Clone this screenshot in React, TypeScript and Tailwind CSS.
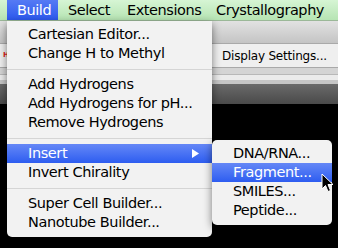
type Row =
  | { kind: 'item'; label: string; active?: boolean; sub?: boolean }
  | { kind: 'sep' }

const mainRows: Row[] = [
  { kind: 'item', label: 'Cartesian Editor...' },
  { kind: 'item', label: 'Change H to Methyl' },
  { kind: 'sep' },
  { kind: 'item', label: 'Add Hydrogens' },
  { kind: 'item', label: 'Add Hydrogens for pH...' },
  { kind: 'item', label: 'Remove Hydrogens' },
  { kind: 'sep' },
  { kind: 'item', label: 'Insert', active: true, sub: true },
  { kind: 'item', label: 'Invert Chirality' },
  { kind: 'sep' },
  { kind: 'item', label: 'Super Cell Builder...' },
  { kind: 'item', label: 'Nanotube Builder...' },
]

const subRows: Row[] = [
  { kind: 'item', label: 'DNA/RNA...' },
  { kind: 'item', label: 'Fragment...', active: true },
  { kind: 'item', label: 'SMILES...' },
  { kind: 'item', label: 'Peptide...' },
]

const menuBar = [
  { label: 'Build', width: 'w-[51px]', active: true },
  { label: 'Select', width: 'w-[59px]' },
  { label: 'Extensions', width: 'w-[89px]' },
  { label: 'Crystallography', width: 'w-[126px]' },
]

function MenuRows({ rows }: { rows: Row[] }) {
  return (
    <>
      {rows.map((row, i) =>
        row.kind === 'sep' ? (
          <div key={i} className="flex h-[12px] items-center">
            <div className="h-px w-full bg-[#d5d5d5]" />
          </div>
        ) : (
          <div
            key={i}
            className={
              row.active
                ? 'flex h-[19px] items-center justify-between bg-gradient-to-b from-[#6587f6] to-[#2d5cf0] pl-[21px] pr-[13px] text-white'
                : 'flex h-[19px] items-center justify-between pl-[21px] pr-[13px] text-black'
            }
          >
            <span>{row.label}</span>
            {row.sub && (
              <svg width="7" height="9" viewBox="0 0 7 9">
                <polygon points="0,0 7,4.5 0,9" fill="white" />
              </svg>
            )}
          </div>
        )
      )}
    </>
  )
}

export default function App() {
  return (
    <div className="relative flex h-[248px] w-[338px] flex-col overflow-hidden bg-black font-['DejaVu_Sans',sans-serif]">
      <div className="flex h-[21px] shrink-0 border-b border-[#9bb898] bg-gradient-to-b from-[#d6f5d4] to-[#b6e4b3] pl-[7px] text-[14.5px] leading-[20px] tracking-[-0.45px] text-black">
        {menuBar.map((m) => (
          <div
            key={m.label}
            className={
              m.active
                ? `${m.width} bg-gradient-to-b from-[#557af4] to-[#2c58ee] pl-[10px] text-white`
                : `${m.width} pl-[10px]`
            }
          >
            {m.label}
          </div>
        ))}
      </div>

      <div className="flex flex-col">
        <div className="h-[22px] bg-gradient-to-b from-[#e2e2e2] to-[#c4c4c4]" />
        <div className="relative flex h-[25px] items-center border-y border-[#a9a9a9] bg-[#efefef] pl-[222px] text-[12px] tracking-[-0.2px] text-black">
          <span className="absolute left-[3px] top-[8px] text-[7px] font-bold leading-none text-[#e02020]">H</span>
          Display Settings...
        </div>
        <div className="h-[6px] bg-[#d4d4d4]" />
        <div className="h-px bg-[#b8b8b8]" />
        <div className="h-[5px] bg-[#ebebeb]" />
        <div className="h-[4px] bg-[#c6c6c6]" />
        <div className="h-[20px] bg-gradient-to-b from-[#6a6a6a] to-[#4a4a4a]" />
      </div>

      <div className="absolute left-[7px] top-[21px] w-[205px] rounded-b-[5px] bg-[#f2f2f2] pt-[4px] pb-[5px] text-[14.5px] tracking-[-0.4px] shadow-[0_3px_8px_rgba(0,0,0,0.5)]">
        <MenuRows rows={mainRows} />
      </div>

      <div className="absolute left-[212px] top-[140px] w-[120px] rounded-[5px] bg-[#f2f2f2] pt-[4px] pb-[5px] text-[14.5px] tracking-[-0.4px] shadow-[0_3px_8px_rgba(0,0,0,0.5)]">
        <MenuRows rows={subRows} />
      </div>

      <svg
        className="absolute left-[321px] top-[173px]"
        width="13"
        height="20"
        viewBox="0 0 13 20"
      >
        <path
          d="M1 1 L1 16 L4.5 12.5 L7 18.5 L9.5 17.5 L7 11.5 L12 11.5 Z"
          fill="black"
          stroke="white"
          strokeWidth="1"
          strokeLinejoin="round"
        />
      </svg>
    </div>
  )
}
